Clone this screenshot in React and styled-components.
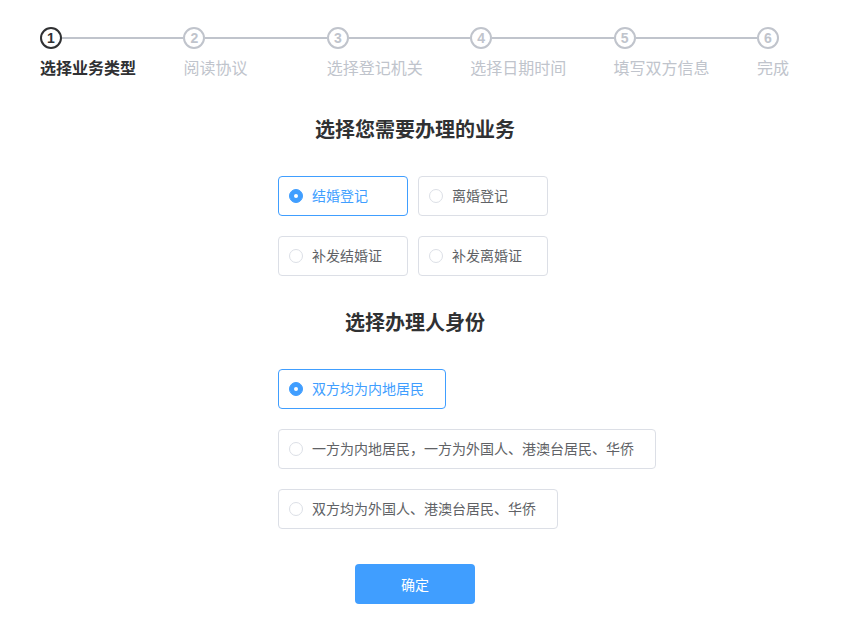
import React, { useState } from "react";
import styled, { createGlobalStyle } from "styled-components";

const steps = ["选择业务类型", "阅读协议", "选择登记机关", "选择日期时间", "填写双方信息", "完成"];
const businessList = ["结婚登记", "离婚登记", "补发结婚证", "补发离婚证"];
const identityList = [
  "双方均为内地居民",
  "一方为内地居民，一方为外国人、港澳台居民、华侨",
  "双方均为外国人、港澳台居民、华侨",
];

const App = () => {
  const [business, setBusiness] = useState(0);
  const [identity, setIdentity] = useState(0);
  const current = 0;

  return (
    <Page>
      <GlobalStyle />
      <Steps>
        {steps.map((s, i) => (
          <Step key={i} last={i === steps.length - 1}>
            <StepHead>
              <StepCircle active={i === current}>{i + 1}</StepCircle>
              {i < steps.length - 1 && <StepLine />}
            </StepHead>
            <StepLabel active={i === current}>{s}</StepLabel>
          </Step>
        ))}
      </Steps>
      <Form>
        <Heading>选择您需要办理的业务</Heading>
        <BusinessGrid>
          {businessList.map((b, i) => (
            <Option key={i} checked={business === i} fixed onClick={() => setBusiness(i)}>
              <Radio checked={business === i} />
              <OptionText>{b}</OptionText>
            </Option>
          ))}
        </BusinessGrid>
        <Heading>选择办理人身份</Heading>
        <IdentityList>
          {identityList.map((b, i) => (
            <Option key={i} checked={identity === i} onClick={() => setIdentity(i)}>
              <Radio checked={identity === i} />
              <OptionText>{b}</OptionText>
            </Option>
          ))}
        </IdentityList>
        <Submit>确定</Submit>
      </Form>
    </Page>
  );
};

export default App;

const GlobalStyle = createGlobalStyle`
  body {
    margin: 0;
    background: #fff;
    font-family: "Liberation Sans", "Noto Sans CJK SC", sans-serif;
  }
`;

const Page = styled.div`
  width: 828px;
  padding-top: 27px;
`;

const Steps = styled.div`
  display: flex;
  padding-left: 40px;
`;

const Step = styled.div`
  width: ${(p) => (p.last ? "auto" : "143.4px")};
  display: flex;
  flex-direction: column;
`;

const StepHead = styled.div`
  display: flex;
  align-items: center;
  height: 22px;
`;

const StepCircle = styled.div`
  width: 22px;
  height: 22px;
  box-sizing: border-box;
  border-radius: 50%;
  border: 2px solid ${(p) => (p.active ? "#303133" : "#c0c4cc")};
  color: ${(p) => (p.active ? "#303133" : "#c0c4cc")};
  display: flex;
  align-items: center;
  justify-content: center;
  font-size: 14px;
  font-weight: bold;
  flex-shrink: 0;
`;

const StepLine = styled.div`
  flex: 1;
  height: 2px;
  background: #c0c4cc;
`;

const StepLabel = styled.div`
  margin-top: 9px;
  font-size: 16px;
  line-height: 22px;
  font-weight: ${(p) => (p.active ? "bold" : "normal")};
  color: ${(p) => (p.active ? "#303133" : "#c0c4cc")};
  white-space: nowrap;
`;

const Form = styled.div`
  width: 274px;
  margin: 36px 0 0 278px;
  display: flex;
  flex-direction: column;
`;

const Heading = styled.h2`
  margin: 0 0 32px;
  text-align: center;
  font-size: 20px;
  line-height: 28px;
  font-weight: bold;
  color: #303133;
  white-space: nowrap;
`;

const BusinessGrid = styled.div`
  display: grid;
  grid-template-columns: 130px 130px;
  column-gap: 10px;
  row-gap: 20px;
  margin-bottom: 33px;
`;

const IdentityList = styled.div`
  display: flex;
  flex-direction: column;
  align-items: flex-start;
  gap: 20px;
`;

const Option = styled.div`
  box-sizing: border-box;
  width: ${(p) => (p.fixed ? "130px" : "auto")};
  height: 40px;
  padding: 0 21px 0 10px;
  display: flex;
  align-items: center;
  gap: 9px;
  border: 1px solid ${(p) => (p.checked ? "#409eff" : "#dcdfe6")};
  border-radius: 4px;
  color: ${(p) => (p.checked ? "#409eff" : "#606266")};
  white-space: nowrap;
  cursor: pointer;
`;

const Radio = styled.span`
  box-sizing: border-box;
  width: 14px;
  height: 14px;
  border-radius: 50%;
  flex-shrink: 0;
  border: 1px solid ${(p) => (p.checked ? "#409eff" : "#dcdfe6")};
  background: ${(p) => (p.checked ? "#409eff" : "#fff")};
  display: flex;
  align-items: center;
  justify-content: center;
  &::after {
    content: "";
    width: 4px;
    height: 4px;
    border-radius: 50%;
    background: #fff;
    display: ${(p) => (p.checked ? "block" : "none")};
  }
`;

const OptionText = styled.span`
  font-size: 14px;
  line-height: 20px;
`;

const Submit = styled.button`
  margin: 35px auto 0;
  width: 120px;
  height: 40px;
  border: none;
  border-radius: 4px;
  background: #409eff;
  color: #fff;
  font-family: inherit;
  font-size: 14px;
  cursor: pointer;
`;
